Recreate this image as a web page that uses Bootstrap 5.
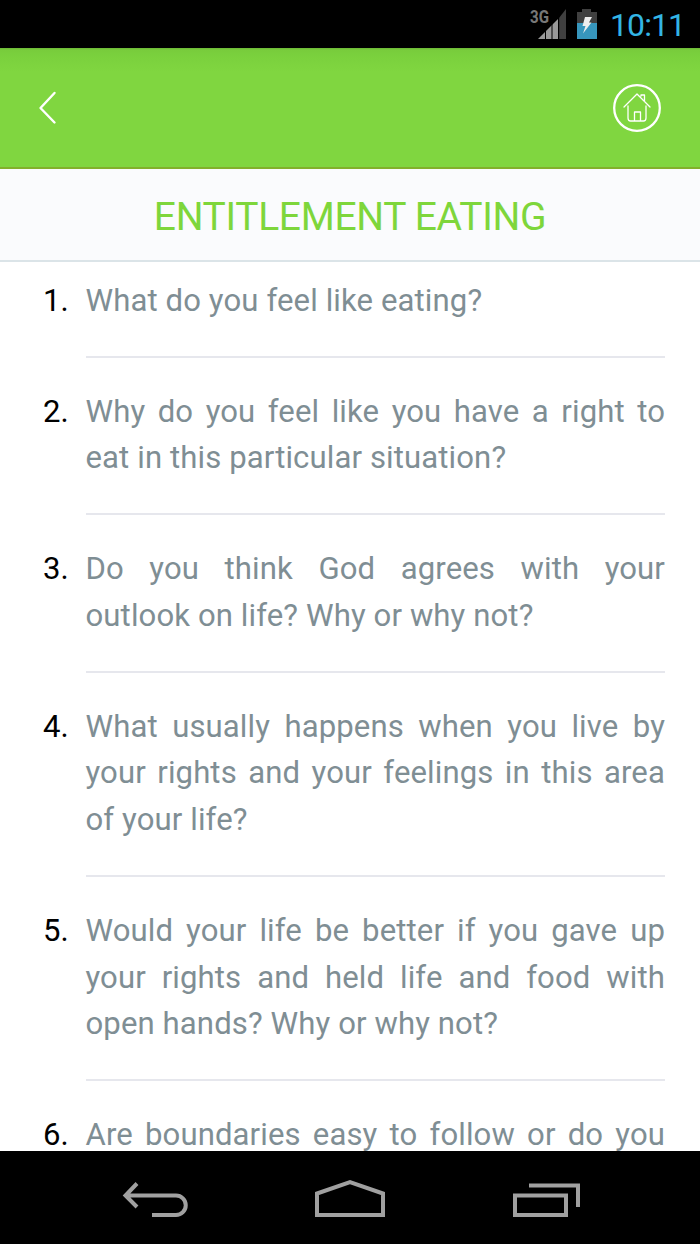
<!DOCTYPE html>
<html lang="en">
<head>
<meta charset="utf-8">
<meta name="viewport" content="width=device-width, initial-scale=1">
<title>Entitlement Eating</title>
<link href="https://cdn.jsdelivr.net/npm/bootstrap@5.3.0/dist/css/bootstrap.min.css" rel="stylesheet">
<style>
body{font-family:Roboto,"Liberation Sans",sans-serif;background:#fff}
.status-bar{height:48px;background:#000;padding-right:14px;padding-top:1px}
.clock{width:76px;margin-left:6px;color:#33b5e5;font-size:32px;line-height:48px;letter-spacing:-.9px;white-space:nowrap}
.app-bar{height:121px;background:linear-gradient(#6cb636 0,#78cc3c 2px,#7ad03d 7px,#80d640 24px);border-bottom:2px solid #82b02b;padding:1px 39px 0 37.5px}
.page-title{height:93px;background:#fafbfd;border-bottom:2px solid #dbe4e8;color:#7ed63b;font-size:39px;line-height:97px;font-weight:400;letter-spacing:-.33px}
.questions{min-height:0;padding:15.3px 35px 0 38px}
.question{line-height:46.65px;font-size:31.1px;letter-spacing:.11px;margin-bottom:30.2px}
.num{width:47.5px;color:#000;flex:none;padding-left:5px;position:relative;top:.5px}
.answer-area{color:#7f8e94;text-align:justify;padding-bottom:32px;border-bottom:2px solid #e6e7ed}
.answer-area>span{position:relative;top:.6px}
.cut-line{text-align-last:justify}
.nav-keys{height:93px;background:#000;padding-top:10px}
svg{display:block;flex:none}
</style>
</head>
<body>
<div class="d-flex flex-column vh-100 overflow-hidden">
  <div class="status-bar d-flex justify-content-end align-items-start flex-shrink-0">
    <svg width="84" height="47" viewBox="0 0 84 47">
      <text x="10" y="21.5" font-size="17.500" font-weight="700" fill="#777" textLength="19" lengthAdjust="spacingAndGlyphs">3G</text>
      <path d="M18 38L38 18V38Z" fill="#999"/>
      <path d="M39 17L46 8V38H39Z" fill="#404040"/>
      <path d="M25.5 25V38M32 19V38M38.7 12V38" stroke="#000" stroke-width="1"/>
      <path d="M57 11H62V8H71V11H77V38H57Z" fill="#404040"/>
      <path d="M57 22H77V38H57Z" fill="#3796bd"/>
      <path d="M65 16H72L69 21.5H71.500L63 32.500L65.500 25H62.500Z" fill="#eee"/>
    </svg>
    <div class="clock">10:11</div>
  </div>
  <header class="app-bar d-flex justify-content-between align-items-center flex-shrink-0">
    <svg width="20" height="34" viewBox="0 0 20 34"><path d="M16.500 2L2.500 17L16.500 31.500" fill="none" stroke="#fff" stroke-width="2.400" stroke-linecap="round" stroke-linejoin="round"/></svg>
    <svg width="48" height="50" viewBox="1 0 48 50" fill="none" stroke="#fff">
      <circle cx="25" cy="25" r="22.800" stroke-width="2.300"/>
      <path d="M12 24L25 11L38 24M16 23V35Q16 38 18.500 38H31.500Q34 38 34 35V23M22.500 38V29H28.500V38M29 13V12H32.500V17.500" stroke-width="1.300" stroke-linecap="round" stroke-linejoin="round"/>
    </svg>
  </header>
  <h1 class="page-title text-center mb-0 flex-shrink-0">ENTITLEMENT EATING</h1>
  <main class="questions flex-grow-1 overflow-hidden">
    <div class="question d-flex"><div class="num">1.</div><div class="answer-area flex-grow-1"><span>What do you feel like eating?</span></div></div>
    <div class="question d-flex"><div class="num">2.</div><div class="answer-area flex-grow-1"><span>Why do you feel like you have a right to eat in this particular situation?</span></div></div>
    <div class="question d-flex"><div class="num">3.</div><div class="answer-area flex-grow-1"><span>Do you think God agrees with your outlook on life? Why or why not?</span></div></div>
    <div class="question d-flex"><div class="num">4.</div><div class="answer-area flex-grow-1"><span>What usually happens when you live by your rights and your feelings in this area of your life?</span></div></div>
    <div class="question d-flex"><div class="num">5.</div><div class="answer-area flex-grow-1"><span>Would your life be better if you gave up your rights and held life and food with open hands? Why or why not?</span></div></div>
    <div class="question d-flex"><div class="num">6.</div><div class="answer-area cut-line flex-grow-1"><span>Are boundaries easy to follow or do you</span></div></div>
  </main>
  <nav class="nav-keys flex-shrink-0">
    <svg width="700" height="83" viewBox="0 0 700 83" fill="none" stroke="#a0a0a0" stroke-width="4">
      <path d="M126 34.500H176A9.400 9.400 0 0 1 176 54H152M137 22.500L125.500 34.500L137 46"/>
      <path d="M317 54V32.500L350 21L383 32.500V54Z"/>
      <path d="M515 34.500H566V54H515ZM529 24.500H578V46"/>
    </svg>
  </nav>
</div>
<script src="https://cdn.jsdelivr.net/npm/bootstrap@5.3.0/dist/js/bootstrap.bundle.min.js"></script>
</body>
</html>
